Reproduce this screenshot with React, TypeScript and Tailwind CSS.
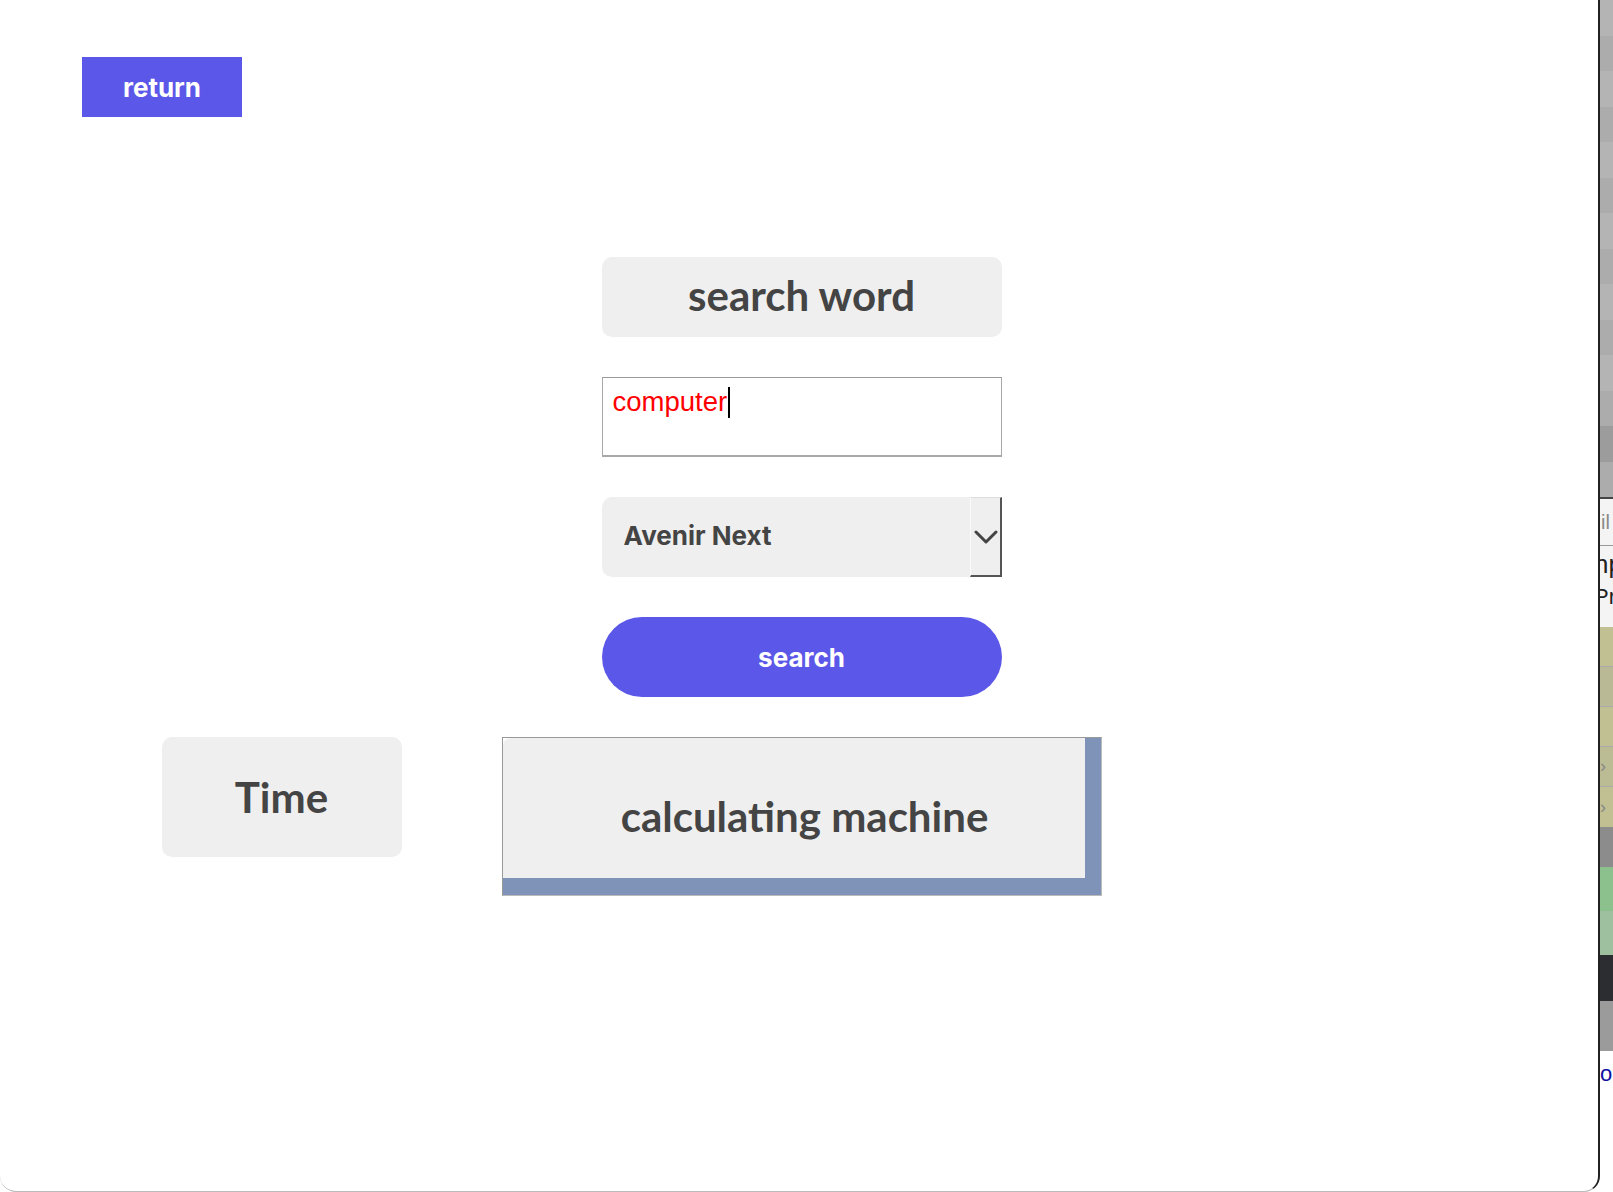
import React from "react";

const grayRows = Array.from({ length: 14 }, (_, i) => i);

function Strip() {
  const mono = { fontFamily: "'Liberation Sans', Arial, sans-serif" };
  return (
    <div className="flex h-[1192px] w-[13px] flex-col overflow-hidden bg-white">
      <div className="flex h-[497px] flex-col">
        {grayRows.map((i) => (
          <div
            key={i}
            className={
              i === 12
                ? "h-[36px] bg-[#9c9c9c]"
                : i % 2 === 0
                ? "h-[36px] bg-[#b4b4b4]"
                : "h-[36px] bg-[#acacac]"
            }
          />
        ))}
      </div>
      <div className="flex h-[130px] flex-col border-t-2 border-[#444] bg-[#f4f4f4] text-[#222]" style={mono}>
        <div className="flex h-[47px] items-center border-b border-[#999] pl-[1px] text-[20px] text-[#888]">il</div>
        <div className="flex h-[37px] items-center -ml-[6px] text-[26px]">np</div>
        <div className="flex h-[44px] items-start -ml-[6px] text-[22px] leading-[28px]">Pr</div>
      </div>
      <div className="h-[40px] border-b border-[#aaa] bg-[#c0c092]" />
      <div className="h-[40px] border-b border-[#aaa] bg-[#b9b996]" />
      <div className="h-[40px] border-b border-[#aaa] bg-[#c0c092]" />
      <div className="flex h-[40px] items-center border-b border-[#aaa] bg-[#bcbc94] text-[18px] text-[#888]" style={mono}>›</div>
      <div className="flex h-[40px] items-center bg-[#c0c092] text-[18px] text-[#888]" style={mono}>›</div>
      <div className="h-[40px] bg-[#8c8c8c]" />
      <div className="h-[44px] bg-[#8cc08c]" />
      <div className="h-[44px] bg-[#9ec09e]" />
      <div className="h-[46px] bg-[#2b2d31]" />
      <div className="h-[50px] bg-[#9b9b9b]" />
      <div className="flex h-[44px] items-center bg-white text-[22px] text-[#1010a0]" style={mono}>o</div>
      <div className="flex-1 bg-white" />
    </div>
  );
}

export default function App() {
  const heading = { fontFamily: "Lato, 'Noto Sans', sans-serif" };
  const ui = { fontFamily: "Inter, 'Liberation Sans', Arial, sans-serif" };
  return (
    <div className="flex h-[1192px] w-[1613px] overflow-hidden bg-white">
      <div className="flex h-[1192px] w-[1600px] flex-col rounded-b-[16px] border-b border-r-2 border-b-[#bbb] border-r-[#222] bg-white pt-[57px]">
        <div className="pl-[82px]">
          <button
            className="flex h-[60px] w-[160px] items-center justify-center bg-[#5b57e8] text-[26px] font-bold text-white"
            style={ui}
          >
            return
          </button>
        </div>

        <div className="mt-[140px] flex flex-col items-center gap-10 pl-[5px]">
          <div
            className="flex h-[80px] w-[400px] items-center justify-center rounded-[10px] bg-[#efefef] pb-[4px] text-[42px] font-bold text-[#444]"
            style={heading}
          >
            search word
          </div>

          <div className="h-[80px] w-[400px] border border-b-2 border-[#a8a8a8] border-t-[#999] bg-white px-[10px] pt-[6px]">
            <div className="flex items-center">
              <span
                className="text-[27.5px] leading-[36px] text-[#ff0000]"
                style={{ fontFamily: "'Liberation Sans', Arial, sans-serif" }}
              >
                computer
              </span>
              <span className="ml-[1px] h-[31px] w-[2px] bg-black" />
            </div>
          </div>

          <div className="flex h-[80px] w-[400px] rounded-l-[10px] bg-[#efefef]">
            <div
              className="flex flex-1 items-center pb-[4px] pl-[22px] text-[26px] font-bold text-[#444]"
              style={ui}
            >
              Avenir Next
            </div>
            <div className="flex h-[80px] w-[32px] items-center justify-center border-t border-l border-r-2 border-b-2 border-t-[#ddd] border-l-[#fafafa] border-r-[#555] border-b-[#555] bg-[#efefef] pl-[1px]">
              <svg width="24" height="14" viewBox="0 0 24 14" fill="none">
                <path d="M2 2 L12 12 L22 2" stroke="#444" strokeWidth="3" strokeLinecap="round" strokeLinejoin="round" />
              </svg>
            </div>
          </div>

          <button
            className="flex h-[80px] w-[400px] items-center justify-center rounded-full bg-[#5b57e8] text-[26px] font-bold text-white"
            style={ui}
          >
            search
          </button>

          <div className="grid w-full grid-cols-[1fr_600px_1fr]">
            <div className="flex justify-end pr-[100px]">
              <div
                className="flex h-[120px] w-[240px] items-center justify-center rounded-[10px] bg-[#efefef] text-[42px] font-bold text-[#444]"
                style={heading}
              >
                Time
              </div>
            </div>
            <div className="h-[159px] w-[600px] border border-[#999] border-r-[#bbb] border-b-[#bbb] bg-white">
              <div
                className="flex h-full w-full items-center justify-center rounded-tl-[8px] bg-[#efefef] pl-[6px] text-[42px] font-bold text-[#444] shadow-[inset_-16px_-17px_0_#7f92b8]"
                style={heading}
              >
                calculating machine
              </div>
            </div>
            <div />
          </div>
        </div>
      </div>
      <Strip />
    </div>
  );
}
